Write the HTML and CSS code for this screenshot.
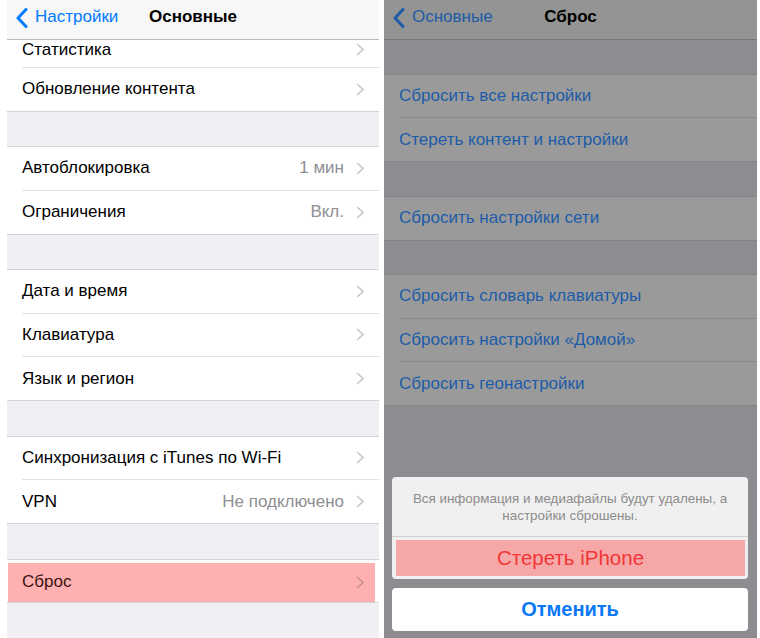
FILE: index.html
```html
<!DOCTYPE html>
<html lang="ru">
<head>
<meta charset="utf-8">
<title>Сброс</title>
<link rel="stylesheet" href="styles.css">
</head>
<body>
<div class="screens">
  <section class="phone">
    <header class="nav">
      <a class="back"><svg class="back-chev" width="12" height="20" viewBox="0 0 12 20"><polyline points="10,1.5 2,10 10,18.5" fill="none" stroke="currentColor" stroke-width="3" stroke-linecap="round" stroke-linejoin="round"/></svg>Настройки</a>
      <h1 class="title">Основные</h1>
      <span></span>
    </header>
    <div class="content">
      <ul class="group first">
        <li class="row"><div class="row-inner cut"><span class="label">Статистика</span><svg class="chev" width="8" height="13" viewBox="0 0 8 13"><polyline points="1,1 7,6.5 1,12" fill="none" stroke="currentColor" stroke-width="1.6"/></svg></div></li>
        <li class="row"><div class="row-inner"><span class="label">Обновление контента</span><svg class="chev" width="8" height="13" viewBox="0 0 8 13"><polyline points="1,1 7,6.5 1,12" fill="none" stroke="currentColor" stroke-width="1.6"/></svg></div></li>
      </ul>
      <ul class="group">
        <li class="row"><div class="row-inner"><span class="label">Автоблокировка</span><span class="value">1 мин</span><svg class="chev" width="8" height="13" viewBox="0 0 8 13"><polyline points="1,1 7,6.5 1,12" fill="none" stroke="currentColor" stroke-width="1.6"/></svg></div></li>
        <li class="row"><div class="row-inner"><span class="label">Ограничения</span><span class="value">Вкл.</span><svg class="chev" width="8" height="13" viewBox="0 0 8 13"><polyline points="1,1 7,6.5 1,12" fill="none" stroke="currentColor" stroke-width="1.6"/></svg></div></li>
      </ul>
      <ul class="group">
        <li class="row"><div class="row-inner"><span class="label">Дата и время</span><svg class="chev" width="8" height="13" viewBox="0 0 8 13"><polyline points="1,1 7,6.5 1,12" fill="none" stroke="currentColor" stroke-width="1.6"/></svg></div></li>
        <li class="row"><div class="row-inner"><span class="label">Клавиатура</span><svg class="chev" width="8" height="13" viewBox="0 0 8 13"><polyline points="1,1 7,6.5 1,12" fill="none" stroke="currentColor" stroke-width="1.6"/></svg></div></li>
        <li class="row"><div class="row-inner"><span class="label">Язык и регион</span><svg class="chev" width="8" height="13" viewBox="0 0 8 13"><polyline points="1,1 7,6.5 1,12" fill="none" stroke="currentColor" stroke-width="1.6"/></svg></div></li>
      </ul>
      <ul class="group">
        <li class="row"><div class="row-inner"><span class="label">Синхронизация с iTunes по Wi-Fi</span><svg class="chev" width="8" height="13" viewBox="0 0 8 13"><polyline points="1,1 7,6.5 1,12" fill="none" stroke="currentColor" stroke-width="1.6"/></svg></div></li>
        <li class="row"><div class="row-inner"><span class="label">VPN</span><span class="value">Не подключено</span><svg class="chev" width="8" height="13" viewBox="0 0 8 13"><polyline points="1,1 7,6.5 1,12" fill="none" stroke="currentColor" stroke-width="1.6"/></svg></div></li>
      </ul>
      <ul class="group">
        <li class="row row-hl"><div class="hl-box"><span class="label">Сброс</span><svg class="chev" width="8" height="13" viewBox="0 0 8 13"><polyline points="1,1 7,6.5 1,12" fill="none" stroke="currentColor" stroke-width="1.6"/></svg></div></li>
      </ul>
    </div>
  </section>

  <section class="phone dim">
    <header class="nav">
      <a class="back"><svg class="back-chev" width="12" height="20" viewBox="0 0 12 20"><polyline points="10,1.5 2,10 10,18.5" fill="none" stroke="currentColor" stroke-width="3" stroke-linecap="round" stroke-linejoin="round"/></svg>Основные</a>
      <h1 class="title">Сброс</h1>
      <span></span>
    </header>
    <div class="content">
      <ul class="group">
        <li class="row"><div class="row-inner"><span class="label link">Сбросить все настройки</span></div></li>
        <li class="row"><div class="row-inner"><span class="label link">Стереть контент и настройки</span></div></li>
      </ul>
      <ul class="group">
        <li class="row"><div class="row-inner"><span class="label link">Сбросить настройки сети</span></div></li>
      </ul>
      <ul class="group">
        <li class="row"><div class="row-inner"><span class="label link">Сбросить словарь клавиатуры</span></div></li>
        <li class="row"><div class="row-inner"><span class="label link">Сбросить настройки «Домой»</span></div></li>
        <li class="row"><div class="row-inner"><span class="label link">Сбросить геонастройки</span></div></li>
      </ul>
    </div>
    <div class="sheet">
      <div class="sheet-group">
        <p class="sheet-msg">Вся информация и медиафайлы будут удалены, а<br>настройки сброшены.</p>
        <div class="sheet-action"><div class="destructive">Стереть iPhone</div></div>
      </div>
      <div class="cancel">Отменить</div>
    </div>
  </section>
</div>
</body>
</html>
```

FILE: styles.css
```css
* { box-sizing: border-box; }

html, body {
  margin: 0;
  padding: 0;
  background: #ffffff;
  font-family: "Liberation Sans", Arial, "Noto Sans", sans-serif;
}

.screens {
  display: flex;
  gap: 5px;
  padding-left: 7px;
  height: 638px;
  overflow: hidden;
}

.phone {
  position: relative;
  width: 372px;
  height: 638px;
  display: flex;
  flex-direction: column;
  background: #efeff4;
  overflow: hidden;
}

.phone.dim {
  width: 373px;
  background: #8d8d91;
}

/* Navigation bar */
.nav {
  flex: none;
  height: 40px;
  display: grid;
  grid-template-columns: 1fr auto 1fr;
  align-items: center;
  padding: 0 9px 5px 9px;
  background: #f7f7f7;
  border-bottom: 1px solid #b9b9bd;
}

.dim .nav {
  background: #949494;
  border-bottom-color: #77777a;
}

.back {
  display: flex;
  align-items: center;
  gap: 7px;
  font-size: 17px;
  color: #007aff;
  white-space: nowrap;
}

.dim .back { color: #1d5ca9; }

.back-chev { flex: none; margin-top: 1px; }

.title {
  margin: 0;
  font-size: 17px;
  font-weight: bold;
  color: #000;
  text-align: center;
}

/* Content */
.content {
  flex: 1;
}

.group {
  list-style: none;
  margin: 34.5px 0 0;
  padding: 0;
  background: #ffffff;
  border-top: 1px solid #d4d4d8;
  border-bottom: 1px solid #d4d4d8;
}

.group.first {
  margin-top: 0;
  border-top: none;
}

.dim .group {
  margin-top: 33.5px;
  background: #9a9a9a;
  border-top-color: #838387;
  border-bottom-color: #838387;
}

.row {
  display: flex;
  padding-left: 15px;
}

.row-inner {
  flex: 1;
  display: flex;
  align-items: center;
  height: 43.5px;
  padding-right: 15px;
  border-bottom: 1px solid #e1e1e4;
}

.row:last-child .row-inner {
  height: 43px;
  border-bottom: none;
}

.row-inner.cut {
  height: 27.5px;
  align-items: flex-start;
  padding-top: 1.5px;
}

.row-inner.cut .label { line-height: 16px; }
.row-inner.cut .chev { margin-top: 1px; }

.dim .row-inner { border-bottom-color: #8a8a8b; }

.label {
  flex: 1;
  font-size: 17px;
  color: #000;
  white-space: nowrap;
}

.label.link { color: #1d5ca9; }

.value {
  font-size: 17px;
  color: #8e8e93;
  margin-right: 12px;
}

.chev {
  flex: none;
  color: #c7c7cc;
}

/* highlighted row */
.row.row-hl {
  padding: 3px 4px 0 1px;
  height: 42px;
}

.hl-box {
  flex: 1;
  display: flex;
  align-items: center;
  padding: 0 11px 0 14px;
  background: #ffb1b1;
}

.hl-box .label { color: #3d1212; }
.hl-box .chev { color: #c88f93; }

/* Action sheet */
.sheet {
  position: absolute;
  left: 8px;
  right: 9px;
  bottom: 7px;
}

.sheet-group {
  background: #f0f0f0;
  border-radius: 4px;
  overflow: hidden;
}

.sheet-msg {
  margin: 0;
  height: 60px;
  padding: 13px 8px;
  font-size: 13.4px;
  line-height: 17px;
  color: #8c8c8c;
  text-align: center;
  border-bottom: 1px solid #d3d3d3;
}

.sheet-action {
  padding: 3px 3px 3px 4px;
}

.destructive {
  height: 36px;
  display: flex;
  align-items: center;
  justify-content: center;
  background: #f6a8a8;
  color: #f23636;
  font-size: 20.5px;
}

.cancel {
  margin-top: 9px;
  height: 43px;
  display: flex;
  align-items: center;
  justify-content: center;
  background: #ffffff;
  border-radius: 4px;
  color: #0a79f6;
  font-size: 20px;
  font-weight: bold;
}
```
